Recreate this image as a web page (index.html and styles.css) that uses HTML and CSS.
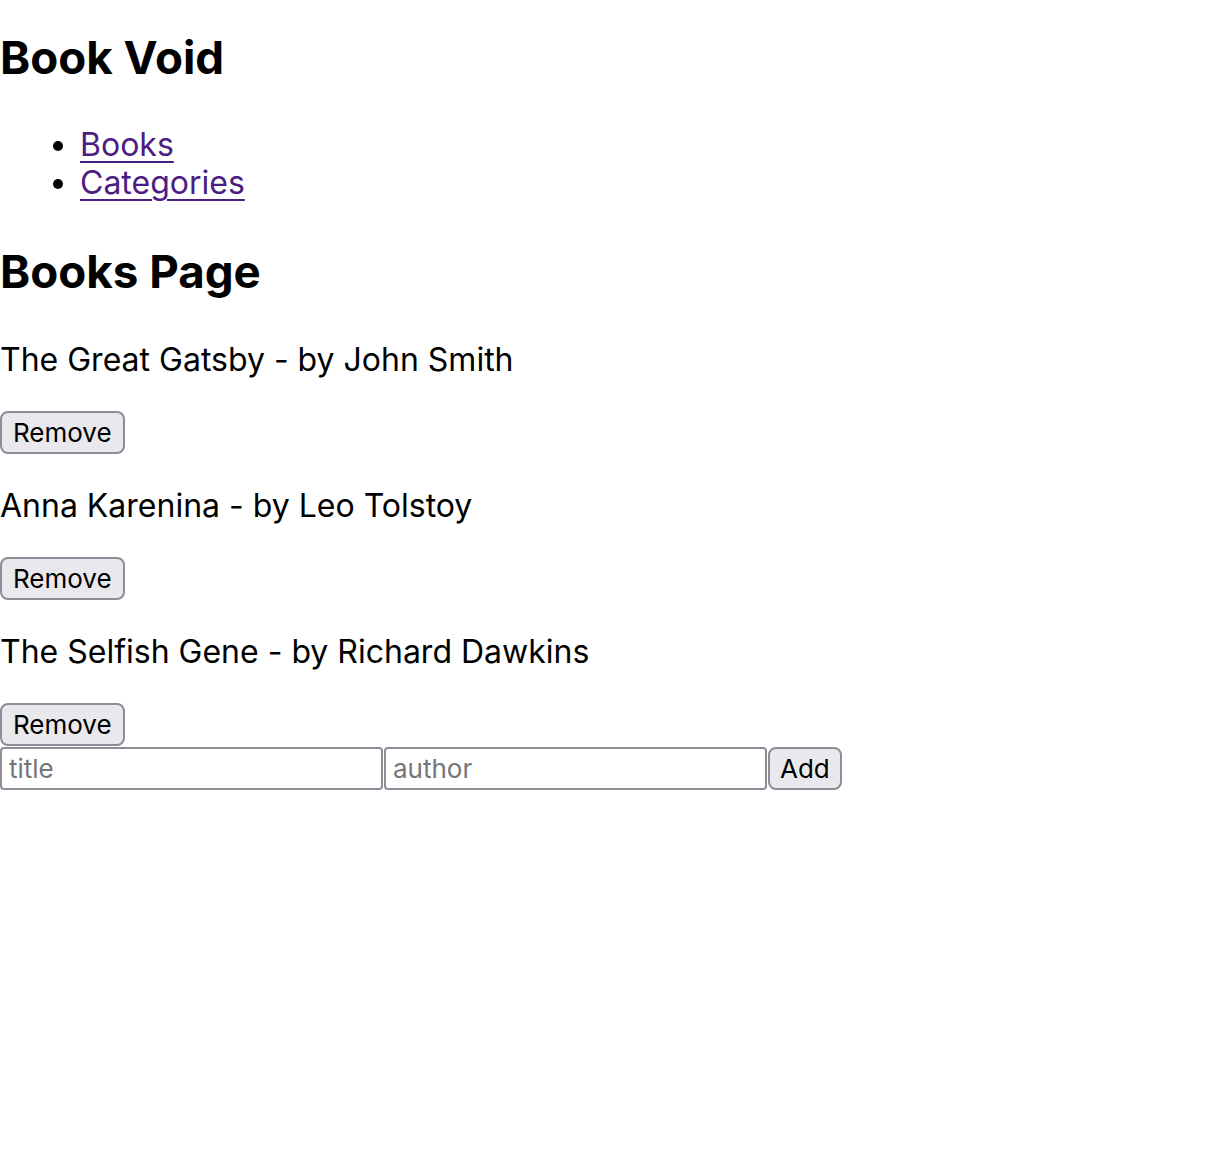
FILE: index.html
```html
<!DOCTYPE html>
<html>
<head>
<meta charset="utf-8">
<link rel="stylesheet" href="styles.css">
</head>
<body>
<h1 class="title">Book Void</h1>
<ul class="nav">
  <li><a href="#">Books</a></li>
  <li><a href="#">Categories</a></li>
</ul>
<h1 class="title">Books Page</h1>
<div class="book">
  <p class="book-text">The Great Gatsby - by John Smith</p>
  <button class="btn">Remove</button>
</div>
<div class="book">
  <p class="book-text">Anna Karenina - by Leo Tolstoy</p>
  <button class="btn">Remove</button>
</div>
<div class="book">
  <p class="book-text">The Selfish Gene - by Richard Dawkins</p>
  <button class="btn">Remove</button>
</div>
<form class="add-form">
  <input class="field" placeholder="title">
  <input class="field" placeholder="author">
  <button class="btn btn-add" type="button">Add</button>
</form>
</body>
</html>
```

FILE: styles.css
```css
html, body {
  margin: 0;
  padding: 0;
  background: #fff;
}
body {
  font-family: Inter, "Noto Sans", sans-serif;
  font-size: 32px;
  color: #000;
}
.title {
  font-size: 45.7px;
  font-weight: 700;
  margin: 30px 0 40px;
  line-height: 56px;
}
.nav {
  margin: 0 0 42px;
  padding-left: 80px;
  line-height: 38px;
}
.nav a {
  color: #4c1d85;
  text-decoration: underline;
  text-decoration-thickness: 2px;
  text-underline-offset: 5px;
}
.book-text {
  margin: 32px 0;
  line-height: 39px;
}
.btn {
  display: block;
  font-family: Inter, "Noto Sans", sans-serif;
  font-size: 26px;
  height: 43px;
  padding: 0 11px;
  margin: 0;
  border: 2px solid #8e8d97;
  border-radius: 8px;
  background: #e9e9ed;
  color: #000;
}
.add-form {
  display: flex;
  gap: 1px;
  margin: 1px 0 0;
}
.field {
  width: 383px;
  height: 43px;
  box-sizing: border-box;
  border: 2px solid #8e8d97;
  border-radius: 4px;
  padding: 0 7px;
  font-family: Inter, "Noto Sans", sans-serif;
  font-size: 26px;
  margin: 0;
}
.field::placeholder {
  color: #75757a;
}
.btn-add {
  padding: 0 10px;
}
```
